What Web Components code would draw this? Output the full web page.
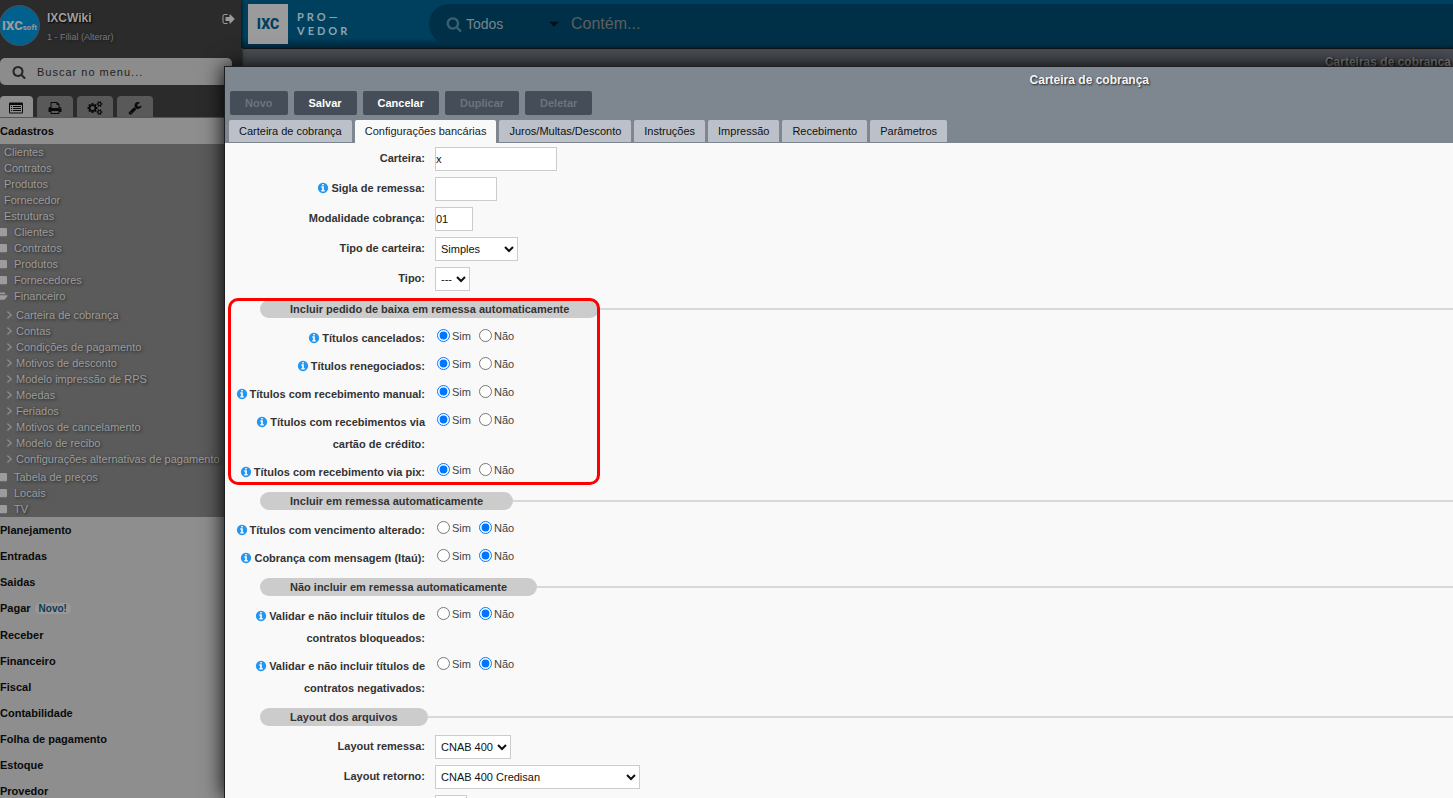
<!DOCTYPE html>
<html lang="pt-BR">
<head>
<meta charset="utf-8">
<meta name="viewport" content="width=device-width, initial-scale=1">
<title>IXC Provedor</title>
<style>
  html, body { margin: 0; height: 100%; overflow: hidden; }
  body { font-family: "Liberation Sans", Arial, sans-serif; font-size: 11px; background: #444a50; }
</style>
</head>
<body>
<ixc-app>
  <ixc-sidebar slot="sidebar"></ixc-sidebar>
  <ixc-topbar slot="top"></ixc-topbar>
  <ixc-window slot="dialog" heading="Carteira de cobrança">
    <ixc-field label="Carteira:" kind="text" value="x" size="122"></ixc-field>
    <ixc-field label="Sigla de remessa:" info kind="text" value="" size="62"></ixc-field>
    <ixc-field label="Modalidade cobrança:" kind="text" value="01" size="38"></ixc-field>
    <ixc-field label="Tipo de carteira:" kind="select" value="Simples" size="83"></ixc-field>
    <ixc-field label="Tipo:" kind="select" value="---" size="35"></ixc-field>
    <ixc-section heading="Incluir pedido de baixa em remessa automaticamente" marked>
      <ixc-field label="Títulos cancelados:" info kind="radio" value="Sim"></ixc-field>
      <ixc-field label="Títulos renegociados:" info kind="radio" value="Sim"></ixc-field>
      <ixc-field label="Títulos com recebimento manual:" info kind="radio" value="Sim"></ixc-field>
      <ixc-field label="Títulos com recebimentos via cartão de crédito:" info kind="radio" value="Sim"></ixc-field>
      <ixc-field label="Títulos com recebimento via pix:" info kind="radio" value="Sim"></ixc-field>
    </ixc-section>
    <ixc-section heading="Incluir em remessa automaticamente">
      <ixc-field label="Títulos com vencimento alterado:" info kind="radio" value="Não"></ixc-field>
      <ixc-field label="Cobrança com mensagem (Itaú):" info kind="radio" value="Não"></ixc-field>
    </ixc-section>
    <ixc-section heading="Não incluir em remessa automaticamente">
      <ixc-field label="Validar e não incluir títulos de contratos bloqueados:" info kind="radio" value="Não"></ixc-field>
      <ixc-field label="Validar e não incluir títulos de contratos negativados:" info kind="radio" value="Não"></ixc-field>
    </ixc-section>
    <ixc-section heading="Layout dos arquivos">
      <ixc-field label="Layout remessa:" kind="select" value="CNAB 400" size="76"></ixc-field>
      <ixc-field label="Layout retorno:" kind="select" value="CNAB 400 Credisan" size="205"></ixc-field>
      <ixc-field label="" kind="text" value="" size="32"></ixc-field>
    </ixc-section>
  </ixc-window>
</ixc-app>

<script>
const SMALL_COG = 'v140q0 16-149 31-12 27-30 52 51 113 51 138 0 4-4 7-122 71-124 71-8 0-46-47t-52-68q-20 2-30 2t-30-2q-14 21-52 68t-46 47q-2 0-124-71-4-3-4-7 0-25 51-138-18-25-30-52-149-15-149-31v-140q0-16 149-31 13-29 30-52-51-113-51-138 0-4 4-7 4-2 35-20t59-34 30-16q8 0 46 46.5t52 67.5q20-2 30-2t30 2q51-71 92-112l6-2q4 0 124 70 4 3 4 7 0 25-51 138 17 23 30 52 149 15 149 31z';
const ICONS = {
  info: 'M1152 1376v-160q0-14-9-23t-23-9h-96v-512q0-14-9-23t-23-9h-320q-14 0-23 9t-9 23v160q0 14 9 23t23 9h96v320h-96q-14 0-23 9t-9 23v160q0 14 9 23t23 9h448q14 0 23-9t9-23zm-128-896v-160q0-14-9-23t-23-9h-192q-14 0-23 9t-9 23v160q0 14 9 23t23 9h192q14 0 23-9t9-23zm640 416q0 209-103 385.5t-279.5 279.5-385.5 103-385.5-103-279.5-279.5-103-385.5 103-385.5 279.5-279.5 385.5-103 385.5 103 279.5 279.5 103 385.5z',
  search: 'M1216 832q0-185-131.5-316.5t-316.5-131.5-316.5 131.5-131.5 316.5 131.5 316.5 316.5 131.5 316.5-131.5 131.5-316.5zm512 832q0 52-38 90t-90 38q-54 0-90-38l-343-342q-179 124-399 124-143 0-273.5-55.5t-225-150-150-225-55.5-273.5 55.5-273.5 150-225 225-150 273.5-55.5 273.5 55.5 225 150 150 225 55.5 273.5q0 220-124 399l343 343q37 37 37 90z',
  exit: 'M704 1440q0 4 1 20t.5 26.5-3 23.5-10 19.5-20.5 6.5h-320q-119 0-203.5-84.5t-84.5-203.5v-704q0-119 84.5-203.5t203.5-84.5h320q13 0 22.5 9.5t9.5 22.5q0 4 1 20t.5 26.5-3 23.5-10 19.5-20.5 6.5h-320q-66 0-113 47t-47 113v704q0 66 47 113t113 47h312l11.5 1 11.5 3 8 5.5 7 9 2 13.5zm928-544q0 26-19 45l-544 544q-19 19-45 19t-45-19-19-45v-288h-448q-26 0-45-19t-19-45v-384q0-26 19-45t45-19h448v-288q0-26 19-45t45-19 45 19l544 544q19 19 19 45z',
  list: 'M160 192h1472q160 0 160 160v1088q0 160-160 160h-1472q-160 0-160-160v-1088q0-160 160-160zM128 512v928q0 32 32 32h1472q32 0 32-32v-928zM256 640h128v128h-128zM512 640h1024v128h-1024zM256 896h128v128h-128zM512 896h1024v128h-1024zM256 1152h128v128h-128zM512 1152h1024v128h-1024z',
  print: 'M448 1536h896v-256h-896v256zm0-640h896v-384h-160q-40 0-68-28t-28-68v-160h-640v640zm1152 64q0-26-19-45t-45-19-45 19-19 45 19 45 45 19 45-19 19-45zm128 0v416q0 13-9.5 22.5t-22.5 9.5h-224v160q0 40-28 68t-68 28h-960q-40 0-68-28t-28-68v-160h-224q-13 0-22.5-9.5t-9.5-22.5v-416q0-79 56.5-135.5t135.5-56.5h64v-544q0-40 28-68t68-28h672q40 0 88 20t76 48l152 152q28 28 48 76t20 88v256h64q79 0 135.5 56.5t56.5 135.5z',
  cogs: 'M832 896q0-106-75-181t-181-75-181 75-75 181 75 181 181 75 181-75 75-181zm768 512q0-52-38-90t-90-38-90 38-38 90q0 53 37.5 90.5t90.5 37.5 90.5-37.5 37.5-90.5zm0-1024q0-52-38-90t-90-38-90 38-38 90q0 53 37.5 90.5t90.5 37.5 90.5-37.5 37.5-90.5zm-384 421v185q0 10-7 19.5t-16 10.5l-155 24q-11 35-32 76 34 48 90 115 7 11 7 20 0 12-7 19-23 30-82.5 89.5t-78.5 59.5q-11 0-21-7l-115-90q-37 19-77 31-11 108-23 155-7 24-30 24h-186q-11 0-20-7.5t-10-17.5l-23-153q-34-10-75-31l-118 89q-7 7-20 7-11 0-21-8-144-133-144-160 0-9 7-19 10-14 41-53t47-61q-23-44-35-82l-152-24q-10-1-17-9.5t-7-19.5v-185q0-10 7-19.5t16-10.5l155-24q11-35 32-76-34-48-90-115-7-11-7-20 0-12 7-20 22-30 82-89t79-59q11 0 21 7l115 90q34-18 77-32 11-108 23-154 7-24 30-24h186q11 0 20 7.5t10 17.5l23 153q34 10 75 31l118-89q8-7 20-7 11 0 21 8 144 133 144 160 0 8-7 19-12 16-42 54t-45 60q23 48 34 82l152 23q10 2 17 10.5t7 19.5zM1856 1338' + SMALL_COG + 'M1856 314' + SMALL_COG,
  wrench: 'M448 1472q0-26-19-45t-45-19-45 19-19 45 19 45 45 19 45-19 19-45zm644-420l-682 682q-37 37-90 37-52 0-91-37l-106-108q-38-36-38-90 0-53 38-91l681-681q39 98 114.5 173.5t173.5 114.5zm634-435q0 39-23 106-47 134-164.5 217.5t-258.5 83.5q-185 0-316.5-131.5t-131.5-316.5 131.5-316.5 316.5-131.5q58 0 121.5 16.5t107.5 46.5q16 11 16 28t-16 28l-293 169v224l193 107q5-3 79-48.5t135.5-81 70.5-35.5q15 0 23.5 10t8.5 25z',
  folder: 'M0 420q0-164 160-164h400q160 0 160 60h900q172 0 172 160v900q0 160-160 160h-1472q-160 0-160-160z',
  folderopen: 'M0 1100V320q0-64 64-64h500q96 0 96 128h740q136 0 136 192v64H500Q380 640 300 740zM100 1420l330-500q60-120 180-120h1200q120 0 60 100l-340 450q-60 100-180 100H160q-90 0-60-30z',
  chevron: 'M700 200L1450 896L700 1592L530 1430L1100 896L530 362z',
  caret: 'M0 512h1792L896 1408z'
};

class Base extends HTMLElement {
  constructor() { super(); this.attachShadow({ mode: 'open' }); }
  connectedCallback() { this.shadowRoot.innerHTML = this.render(); }
}

class IxcIcon extends Base {
  render() {
    return `<style>
      :host { display: inline-block; width: 12px; height: 12px; flex: none; }
      svg { display: block; width: 100%; height: 100%; fill: currentColor; overflow: visible; }
    </style><svg viewBox="0 0 1792 1792" aria-hidden="true"><path fill-rule="evenodd" d="${ICONS[this.getAttribute('name')]}"/></svg>`;
  }
}

class IxcApp extends Base {
  render() {
    return `<style>
      :host { display: flex; height: 100vh; overflow: hidden; position: relative; }
      .main { flex: 1; min-width: 0; display: flex; flex-direction: column; }
      .page { flex: 1; margin-left: 2px; border-top: 1px solid #101214; background: #4b4f55; }
      h2 { margin: 0; padding-right: 2px; font-size: 12px; line-height: 26px; text-align: right; color: #868686; text-shadow: 1px 1px 2px #000; }
      ::slotted([slot=sidebar]) { flex: none; width: 241px; z-index: 1; }
      ::slotted([slot=dialog]) { position: absolute; z-index: 2; inset: 66px 0 0 224px; }
    </style>
    <slot name="sidebar"></slot>
    <div class="main"><slot name="top"></slot><div class="page"><h2>Carteiras de cobrança</h2></div></div>
    <slot name="dialog"></slot>`;
  }
}

class IxcTopbar extends Base {
  render() {
    return `<style>
      :host { display: flex; height: 48px; flex: none; background: linear-gradient(#00405f 38px, #002538); }
      .logo { display: flex; flex: none; width: 188px; padding: 4px 0 0 7px; box-sizing: border-box; gap: 9px; }
      .box { width: 40px; height: 40px; background: #9b9b9b; color: #00405f; font: 900 14px/40px Roboto, sans-serif; text-align: center; }
      .name { font: 700 11px/14px Lato, sans-serif; letter-spacing: 3px; color: #8fa3ad; padding-top: 6px; }
      .find { flex: 1; min-width: 0; display: flex; align-items: center; margin: 4px 0; padding-left: 17px; border-radius: 20px 0 0 20px; background: #003048; color: #74868f; }
      .find ixc-icon { width: 16px; height: 16px; color: #3c6072; }
      select { appearance: none; border: 0; padding: 0; margin-left: 4px; width: 83px; background: none; color: inherit; font: 14px "Liberation Sans", sans-serif; }
      .find ixc-icon.caret { width: 10px; height: 10px; color: #001018; }
      input { flex: 1; min-width: 0; border: 0; padding: 0; margin-left: 12px; background: none; font: 16px "Liberation Sans", sans-serif; color: #74868f; }
      input::placeholder { color: #5e5e5e; }
    </style>
    <div class="logo"><div class="box">IXC</div><div class="name">PRO—<br>VEDOR</div></div>
    <div class="find"><ixc-icon name="search"></ixc-icon>
      <select aria-label="Campo"><option>Todos</option></select><ixc-icon class="caret" name="caret"></ixc-icon>
      <input type="text" placeholder="Contém..." aria-label="Contém"></div>`;
  }
}

class IxcSidebar extends Base {
  render() {
    const link = (icon, text) => `<li><a href="#">${icon ? `<ixc-icon name="${icon}"></ixc-icon>` : ''}${text}</a></li>`;
    const plain = ['Clientes', 'Contratos', 'Produtos', 'Fornecedor', 'Estruturas'];
    const folders = ['Clientes', 'Contratos', 'Produtos', 'Fornecedores'];
    const finance = ['Carteira de cobrança', 'Contas', 'Condições de pagamento', 'Motivos de desconto', 'Modelo impressão de RPS', 'Moedas', 'Feriados', 'Motivos de cancelamento', 'Modelo de recibo', 'Configurações alternativas de pagamento'];
    const last = ['Tabela de preços', 'Locais', 'TV'];
    const groups = ['Planejamento', 'Entradas', 'Saidas', 'Pagar', 'Receber', 'Financeiro', 'Fiscal', 'Contabilidade', 'Folha de pagamento', 'Estoque', 'Provedor'];
    return `<style>
      :host { display: flex; flex-direction: column; background: #2b2b2b; overflow: hidden; box-shadow: 0 0 4px #000; }
      .user { display: flex; height: 58px; flex: none; box-sizing: border-box; padding: 5px 5px 0 0; }
      .avatar { width: 41px; height: 41px; flex: none; box-sizing: border-box; margin-left: -1px; border: 1px solid #44525a; border-radius: 50%; background: #00618f; color: #9a9a9a; display: flex; align-items: baseline; justify-content: center; font: 900 13px/40px Roboto, sans-serif; }
      .avatar small { font: 700 8px/40px Roboto, sans-serif; }
      .who { flex: 1; padding: 5px 0 0 7px; text-shadow: 1px 1px 2px #000; }
      .who b { display: block; font-size: 12px; line-height: 16px; color: #9f9f9f; }
      .who a { display: block; font-size: 9px; line-height: 22px; color: #777; text-decoration: none; }
      .out { align-self: flex-start; margin-top: 7px; padding: 0; border: 0; background: none; color: #9a9a9a; }
      .out ixc-icon { width: 14px; height: 14px; display: block; }
      .find { display: flex; align-items: center; flex: none; height: 27px; margin-right: 9px; padding-left: 12px; border-radius: 5px; background: #8c8c8c; color: #262626; }
      .find ixc-icon { width: 14px; height: 14px; }
      .find input { flex: 1; min-width: 0; margin-left: 11px; padding: 0; border: 0; background: none; font: 11px "Liberation Sans", sans-serif; letter-spacing: 1px; }
      .find input::placeholder { color: #222; }
      .tabs { display: flex; flex: none; gap: 4px; padding-top: 11px; border-bottom: 1px solid #565656; }
      .tabs button { display: flex; align-items: center; justify-content: center; width: 36px; height: 21px; padding: 2px 0 0; border: 0; border-radius: 4px 4px 0 0; background: #595959; color: #0a0a0a; }
      .tabs button:first-child { width: 33px; background: #8e8e8e; padding-right: 2px; }
      .tabs ixc-icon { width: 14px; height: 14px; }
      h3 { margin: 0; flex: none; font-size: 11px; line-height: 26px; background: #8e8e8e; color: #0a0a0a; }
      h3:nth-of-type(5) { line-height: 27px; }
      h3 span { margin-left: 4px; padding: 0 4px; border-radius: 5px; background: #999; color: #0c3a55; font-size: 10px; line-height: 11px; display: inline-block; }
      nav { flex: none; background: #5b5b5b; overflow: hidden; }
      ul { list-style: none; margin: 0; padding: 0; }
      a { display: flex; align-items: center; gap: 8px; line-height: 16px; color: #9c9c9c; text-decoration: none; text-shadow: 1px 1px 3px #222; white-space: nowrap; }
      .plain a { padding-left: 4px; }
      .folders { margin-left: -5px; }
      .folders a { gap: 7px; }
      .folders ixc-icon { width: 12px; height: 12px; }
      .sub { padding: 3px 0 2px 4px; }
      .sub a { gap: 2px; }
      .sub ixc-icon { width: 10px; height: 10px; color: #8c8c8c; }
    </style>
    <div class="user"><div class="avatar">IXC<small>soft</small></div>
      <div class="who"><b>IXCWiki</b><a href="#">1 - Filial (Alterar)</a></div>
      <button class="out" aria-label="Sair"><ixc-icon name="exit"></ixc-icon></button></div>
    <div class="find"><ixc-icon name="search"></ixc-icon><input type="text" placeholder="Buscar no menu..." aria-label="Buscar no menu"></div>
    <div class="tabs"><button aria-label="Menu"><ixc-icon name="list"></ixc-icon></button><button aria-label="Imprimir"><ixc-icon name="print"></ixc-icon></button><button aria-label="Configurações"><ixc-icon name="cogs"></ixc-icon></button><button aria-label="Ferramentas"><ixc-icon name="wrench"></ixc-icon></button></div>
    <h3>Cadastros</h3>
    <nav><ul class="plain">${plain.map(t => link('', t)).join('')}</ul>
      <ul class="folders">${folders.map(t => link('folder', t)).join('')}${link('folderopen', 'Financeiro')}</ul>
      <ul class="sub">${finance.map(t => link('chevron', t)).join('')}</ul>
      <ul class="folders">${last.map(t => link('folder', t)).join('')}</ul></nav>
    ${groups.map(t => `<h3>${t}${t === 'Pagar' ? '<span>Novo!</span>' : ''}</h3>`).join('')}`;
  }
}

class IxcWindow extends Base {
  render() {
    const actions = [['Novo', 1], ['Salvar', 0], ['Cancelar', 0], ['Duplicar', 1], ['Deletar', 1]];
    const tabs = ['Carteira de cobrança', 'Configurações bancárias', 'Juros/Multas/Desconto', 'Instruções', 'Impressão', 'Recebimento', 'Parâmetros'];
    return `<style>
      :host { display: flex; flex-direction: column; border: solid #1c1e22; border-width: 1px 0 0 1px; background: #f9f9f9; box-shadow: 0 0 20px #000; }
      header { flex: none; background: #7e8790; }
      h1 { margin: 0; height: 24px; padding-right: 304px; font-size: 12px; line-height: 26px; text-align: right; color: #f4f4f4; text-shadow: 1px 1px 2px #222; }
      .actions { display: flex; gap: 6px; padding-left: 5px; }
      .actions button { height: 24px; padding: 0 15px; border: 0; border-radius: 2px; background: #454e58; color: #fff; font: bold 11px "Liberation Sans", sans-serif; }
      .actions button:disabled { color: #6b747d; }
      .tabs { display: flex; gap: 3px; padding: 5px 0 0 4px; height: 23px; }
      .tabs button { height: 22px; padding: 0 10px; border: 0; border-radius: 2px 2px 0 0; background: #bcc1c9; color: #111; font: 11px "Liberation Sans", sans-serif; }
      .tabs button[aria-selected=true] { height: 23px; padding-bottom: 1px; background: #f9f9f9; color: #222; }
      main { flex: 1; min-height: 0; overflow: hidden; padding-top: 4px; }
    </style>
    <header><h1>${this.getAttribute('heading')}</h1>
      <div class="actions">${actions.map(([t, off]) => `<button ${off ? 'disabled' : ''}>${t}</button>`).join('')}</div>
      <div class="tabs" role="tablist">${tabs.map((t, i) => `<button role="tab" aria-selected="${i === 1}">${t}</button>`).join('')}</div></header>
    <main><slot></slot></main>`;
  }
}

class IxcSection extends Base {
  render() {
    return `<style>
      :host { display: flow-root; position: relative; }
      :host([marked])::after { content: ""; position: absolute; top: 1px; bottom: 4px; left: 3px; width: 372px; box-sizing: border-box; border: 3px solid #f00; border-radius: 10px; pointer-events: none; }
      .head { display: flex; align-items: center; padding: 3px 0 9px 35px; }
      .head::after { content: ""; flex: 1; height: 2px; background: #d8d8d8; }
      h2 { margin: 0; padding: 0 30px; border-radius: 9px; background: #ccc; color: #333; font-size: 11px; line-height: 18px; }
    </style><div class="head"><h2>${this.getAttribute('heading')}</h2></div><slot></slot>`;
  }
}

class IxcField extends Base {
  render() {
    const kind = this.getAttribute('kind'), value = this.getAttribute('value'), text = this.getAttribute('label');
    const icon = this.hasAttribute('info') ? '<ixc-icon name="info"></ixc-icon>' : '';
    const size = `style="width:${this.getAttribute('size')}px"`;
    const label = kind === 'radio' ? `<div class="label" id="l">${icon}${text}</div>` : `<label class="label" for="f">${icon}${text}</label>`;
    const control = kind === 'text' ? `<input id="f" type="text" value="${value}" ${size}>`
      : kind === 'select' ? `<select id="f" ${size}><option>${value}</option></select>`
      : `<div class="radios" role="radiogroup" aria-labelledby="l">${['Sim', 'Não'].map(o => `<label><input type="radio" name="r" ${o === value ? 'checked' : ''}>${o}</label>`).join('')}</div>`;
    return `<style>
      :host { display: flex; align-items: flex-start; gap: 10px; margin-bottom: 6px; color: #333; }
      .label { flex: none; width: 190px; padding-left: 10px; font-weight: bold; line-height: 22px; text-align: right; }
      .label ixc-icon { color: #2196f3; margin-right: 2px; vertical-align: -2px; }
      input[type=text], select { box-sizing: border-box; height: 24px; border: 1px solid #ccc; border-radius: 0; padding: 0; background: #fff; color: #111; font: 11px "Liberation Sans", sans-serif; }
      select { padding-left: 1px; margin: 0; }
      .radios { display: flex; gap: 8px; padding-left: 2px; line-height: 18px; color: #444; }
      .radios label { display: flex; align-items: center; gap: 2px; }
      .radios input { margin: 0 0 2px; width: 13px; height: 13px; }
    </style>${label}${control}`;
  }
}

customElements.define('ixc-icon', IxcIcon);
customElements.define('ixc-app', IxcApp);
customElements.define('ixc-topbar', IxcTopbar);
customElements.define('ixc-sidebar', IxcSidebar);
customElements.define('ixc-window', IxcWindow);
customElements.define('ixc-section', IxcSection);
customElements.define('ixc-field', IxcField);
</script>
</body>
</html>
